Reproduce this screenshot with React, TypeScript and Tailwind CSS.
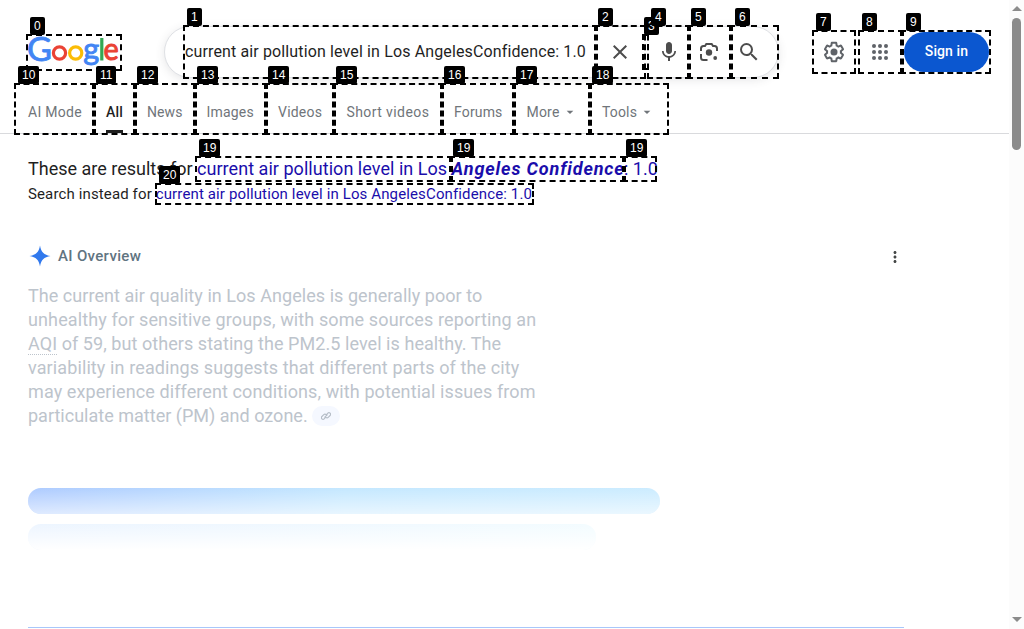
import type { ReactNode } from "react";
import { MdMic, MdSearch, MdClose, MdMoreVert, MdArrowDropDown } from "react-icons/md";

const tabs = [
  { label: "AI Mode", cell: "w-[78px] tracking-[0.3px]" },
  { label: "All", cell: "w-[41px] text-[#1f1f1f] font-medium tracking-[0.2px]", active: true },
  { label: "News", cell: "w-[59.5px] tracking-[0.1px]" },
  { label: "Images", cell: "w-[71.5px] tracking-[0.2px]" },
  { label: "Videos", cell: "w-[68.5px] tracking-[0.22px]" },
  { label: "Short videos", cell: "w-[107.5px] tracking-[0.41px]" },
  { label: "Forums", cell: "w-[72.5px] tracking-[0.15px]" },
  { label: "More", cell: "w-[75.5px] tracking-[0.2px]", arrow: true },
  { label: "Tools", cell: "w-[79px] tracking-[0.15px]", arrow: true },
];

const boxes = [
  "left-[26px] top-[34px] w-[96px] h-[37px]",
  "left-[183px] top-[25px] w-[415px] h-[54px]",
  "left-[594px] top-[25px] w-[52px] h-[54px]",
  "left-[642px] top-[34px] w-[7px] h-[36px]",
  "left-[647px] top-[25px] w-[44px] h-[54px]",
  "left-[687px] top-[25px] w-[46px] h-[54px]",
  "left-[729px] top-[25px] w-[50px] h-[54px]",
  "left-[812px] top-[30px] w-[44px] h-[44px]",
  "left-[858px] top-[30px] w-[46px] h-[44px]",
  "left-[900px] top-[30px] w-[91px] h-[44px]",
  "left-[14px] top-[83px] w-[82px] h-[52px]",
  "left-[92px] top-[83px] w-[45px] h-[52px]",
  "left-[133px] top-[83px] w-[64px] h-[52px]",
  "left-[193px] top-[83px] w-[75px] h-[52px]",
  "left-[264px] top-[83px] w-[72px] h-[52px]",
  "left-[332px] top-[83px] w-[112px] h-[52px]",
  "left-[440px] top-[83px] w-[76px] h-[52px]",
  "left-[512px] top-[83px] w-[80px] h-[52px]",
  "left-[588px] top-[83px] w-[81px] h-[52px]",
  "left-[195px] top-[156px] w-[258px] h-[26px]",
  "left-[449px] top-[156px] w-[177px] h-[26px]",
  "left-[622px] top-[156px] w-[35px] h-[26px]",
  "left-[155px] top-[183px] w-[379px] h-[22px]",
];

const badges: [string, string][] = [
  ["0", "left-[30px] top-[17px]"],
  ["1", "left-[187px] top-[8px]"],
  ["2", "left-[598px] top-[8px]"],
  ["3", "left-[644px] top-[17px]"],
  ["4", "left-[651px] top-[8px]"],
  ["5", "left-[691px] top-[8px]"],
  ["6", "left-[735px] top-[8px]"],
  ["7", "left-[816px] top-[13px]"],
  ["8", "left-[862px] top-[13px]"],
  ["9", "left-[906px] top-[13px]"],
  ["10", "left-[18px] top-[66px]"],
  ["11", "left-[96px] top-[66px]"],
  ["12", "left-[137px] top-[66px]"],
  ["13", "left-[197px] top-[66px]"],
  ["14", "left-[268px] top-[66px]"],
  ["15", "left-[336px] top-[66px]"],
  ["16", "left-[444px] top-[66px]"],
  ["17", "left-[516px] top-[66px]"],
  ["18", "left-[592px] top-[66px]"],
  ["19", "left-[199px] top-[139px]"],
  ["19", "left-[453px] top-[139px]"],
  ["19", "left-[626px] top-[139px]"],
  ["20", "left-[159px] top-[166px]"],
];

const paragraph: [ReactNode, string][] = [
  ["The current air quality in Los Angeles is generally poor to", "tracking-[0.05px]"],
  ["unhealthy for sensitive groups, with some sources reporting an", "tracking-[0.12px]"],
  [
    <><span className="underline decoration-dotted decoration-1 underline-offset-4">AQI</span> of 59, but others stating the PM2.5 level is healthy. The</>,
    "tracking-[0.06px]",
  ],
  ["variability in readings suggests that different parts of the city", "tracking-[0.11px]"],
  ["may experience different conditions, with potential issues from", "tracking-[0.1px]"],
];

function Logo() {
  return (
    <svg width="96" height="38" viewBox="0 0 96 38" className="shrink-0 overflow-visible" fontFamily="Lato, sans-serif" aria-label="Google">
      <text x="-1" y="24.700" fontSize="32.500" textLength="25" lengthAdjust="spacingAndGlyphs" fill="#4285f4" stroke="#4285f4" strokeWidth="0.8">G</text>
      <circle cx="31.500" cy="17" r="6.100" fill="none" stroke="#ea4335" strokeWidth="3.200" />
      <circle cx="47.700" cy="17" r="6.100" fill="none" stroke="#fbbc05" strokeWidth="3.200" />
      <text x="55.300" y="24" fontSize="31" textLength="16" lengthAdjust="spacingAndGlyphs" fill="#4285f4" stroke="#4285f4" strokeWidth="0.900">g</text>
      <rect x="72.200" y="2" width="3.200" height="22.500" fill="#34a853" />
      <text x="75.500" y="24.300" fontSize="30.500" textLength="15.200" lengthAdjust="spacingAndGlyphs" fill="#ea4335" stroke="#ea4335" strokeWidth="1">e</text>
    </svg>
  );
}

function LensIcon() {
  return (
    <svg width="20" height="20" viewBox="0 0 20 20" fill="none" stroke="#4d4d4d" strokeWidth="2">
      <path d="M2 9V6.5A2.5 2.5 0 0 1 4.500 4H6l1.300-2h5.400L14 4h1.500A2.500 2.500 0 0 1 18 6.500V9M2 12v3.500A2.500 2.500 0 0 0 4.500 18H8.500" />
      <circle cx="10" cy="10.500" r="3.200" fill="#4d4d4d" stroke="none" />
      <circle cx="16.200" cy="16" r="1.900" fill="#4d4d4d" stroke="none" />
    </svg>
  );
}

function GearIcon() {
  return (
    <svg width="24" height="24" viewBox="0 0 24 24" fill="#5f6368">
      <path d="M13.850 22.250h-3.700c-.74 0-1.360-.54-1.450-1.270l-.27-1.890c-.27-.14-.53-.29-.79-.46l-1.800.72c-.7.26-1.470-.03-1.810-.65L2.200 15.530c-.35-.66-.2-1.440.36-1.880l1.530-1.190c-.01-.15-.02-.3-.02-.46 0-.15.01-.31.02-.46l-1.520-1.190c-.59-.45-.74-1.260-.37-1.880l1.850-3.190c.34-.62 1.110-.9 1.790-.63l1.810.73c.26-.17.52-.32.78-.46l.27-1.910c.09-.7.71-1.250 1.440-1.250h3.700c.74 0 1.360.54 1.450 1.270l.27 1.890c.27.14.53.29.79.46l1.800-.72c.71-.26 1.480.03 1.820.65l1.840 3.180c.36.66.2 1.440-.36 1.880l-1.520 1.190c.01.15.02.3.02.46s-.01.31-.02.46l1.520 1.190c.56.45.72 1.230.37 1.860l-1.860 3.220c-.34.62-1.110.9-1.800.63l-1.800-.72c-.26.17-.52.32-.78.46l-.27 1.910c-.1.680-.72 1.220-1.460 1.220zm-3.230-2h2.760l.37-2.550.53-.22c.44-.18.88-.44 1.340-.78l.45-.34 2.380.96 1.380-2.400-2.030-1.580.07-.56c.03-.26.06-.51.06-.78s-.03-.53-.06-.78l-.07-.56 2.030-1.580-1.390-2.400-2.390.96-.45-.35c-.42-.32-.87-.58-1.330-.77l-.52-.22-.37-2.550h-2.760l-.37 2.550-.53.210c-.44.190-.88.440-1.340.790l-.45.330-2.380-.95-1.390 2.390 2.030 1.580-.07.560a7 7 0 0 0-.06.790c0 .26.020.53.060.78l.07.560-2.030 1.580 1.380 2.400 2.390-.96.450.350c.430.330.860.580 1.330.770l.530.220z" />
      <circle cx="12" cy="12" r="3.500" />
    </svg>
  );
}

function AppsIcon() {
  return (
    <svg width="16" height="16" viewBox="0 0 16 16" fill="#5f6368">
      {[2, 8, 14].map((y) => [2, 8, 14].map((x) => <circle key={`${x}-${y}`} cx={x} cy={y} r="2" />))}
    </svg>
  );
}

function Header() {
  return (
    <header className="flex h-[134px] flex-col border-b border-[#d9dadd]">
      <div className="flex h-[83px] pl-[28px] pt-[26px]">
        <div className="w-[136px] pt-[10px]"><Logo /></div>
        <div className="flex h-[52px] w-[615px] items-center rounded-full border border-[#dfe1e5] bg-white shadow-[0_2px_10px_rgba(60,64,67,0.13)]">
          <span className="w-[432px] whitespace-nowrap pl-5 text-base tracking-[0.13px] text-[#1f1f1f]">
            current air pollution level in Los AngelesConfidence: 1.0
          </span>
          <span className="flex w-[46px] justify-center"><MdClose size={24} color="#4d4d4d" /></span>
          <span className="ml-[5px] flex w-[42px] justify-center"><MdMic size={24} color="#4d4d4d" /></span>
          <span className="flex w-[38px] justify-center"><LensIcon /></span>
          <span className="flex w-[42px] justify-center"><MdSearch size={24} color="#4d4d4d" /></span>
        </div>
        <div className="flex h-[52px] items-center pl-[43px]">
          <GearIcon />
          <span className="ml-[26px]"><AppsIcon /></span>
          <button className="ml-4 h-10 w-[85px] rounded-full bg-[#0b57d0] pb-[2px] text-sm font-medium tracking-[0.1px] text-white">Sign in</button>
        </div>
      </div>
      <nav className="flex h-[50px] pl-4 text-sm text-[#70757a]">
        {tabs.map((t) => (
          <div key={t.label} className={`flex shrink-0 px-3 ${t.cell}`}>
            <span className={`flex items-center whitespace-nowrap ${t.active ? "border-b-[3px] border-[#1f1f1f] pt-[11px]" : "pt-2"}`}>
              {t.label}
              {t.arrow && <MdArrowDropDown size={16} className="ml-[2px]" />}
            </span>
          </div>
        ))}
      </nav>
    </header>
  );
}

function Overview() {
  return (
    <section className="mt-[35px] w-[876px] border-b border-[#a8c7fa]">
      <div className="flex h-8 items-center">
        <svg width="24" height="24" viewBox="0 0 24 24" fill="#3179ed">
          <path d="M12 1.500C13 8 16 11 22.500 12 16 13 13 16 12 22.500 11 16 8 13 1.500 12 8 11 11 8 12 1.500Z" />
        </svg>
        <h2 className="ml-[6px] text-[15px] font-medium tracking-[0.33px] text-[#5f7481]">AI Overview</h2>
        <MdMoreVert size={18} className="mt-[2px] ml-auto text-[#444746]" />
      </div>
      <div className="mt-3 text-lg leading-6 text-[#bdc4cc]">
        {paragraph.map(([text, spacing], i) => (
          <p key={i} className={`whitespace-nowrap ${spacing}`}>{text}</p>
        ))}
        <p className="flex items-center tracking-[0.01px]">
          particulate matter (PM) and ozone.
          <span className="ml-1 flex h-5 w-7 items-center justify-center rounded-full bg-[#f5f8ff]">
            <svg width="10" height="10" viewBox="0 0 10 10" fill="none" stroke="#b5bdc7" strokeWidth="1.100" strokeLinecap="round">
              <path d="M4.300 6.700 3.200 7.800a1.600 1.600 0 0 1-2.300-2.300l1.900-1.900a1.600 1.600 0 0 1 2.300 0M5.700 3.300l1.100-1.100a1.600 1.600 0 0 1 2.300 2.300L7.200 6.400a1.600 1.600 0 0 1-2.300 0M3.800 6.200l2.400-2.400" />
            </svg>
          </span>
        </p>
      </div>
      <div className="mt-[60px] h-[26px] w-[632px] overflow-hidden rounded-[13px] bg-linear-to-r from-[#aecbff] via-[#c5e8ff] via-50% to-[#ccecff]">
        <div className="h-full bg-linear-to-b from-transparent to-white/60" />
      </div>
      <div className="mt-[10px] mb-[77px] h-[26px] w-[568px] overflow-hidden rounded-[13px] bg-linear-to-r from-[#edf5ff] to-[#f3fcff]">
        <div className="h-full bg-linear-to-b from-transparent to-white" />
      </div>
    </section>
  );
}

export default function App() {
  return (
    <div className="relative flex h-[629px] w-[1024px] overflow-hidden bg-white font-['Roboto',sans-serif]">
      <div className="w-[1009px]">
        <Header />
        <main className="pl-7 text-[#1f1f1f]">
          <p className="flex pt-[21px] text-lg leading-7 whitespace-pre">
            These are results for{" "}
            <a className="flex text-[#1a0dab]">
              <span className="w-[254.5px] tracking-[0.04px]">current air pollution level in Los </span>
              <b className="w-[172.5px] tracking-[0.86px] font-bold italic">Angeles Confidence</b>
              <span>: 1.0</span>
            </a>
          </p>
          <p className="text-[15px] leading-[22px] whitespace-pre tracking-[0.13px]">
            Search instead for <a className="text-[#1a0dab]">current air pollution level in Los AngelesConfidence: 1.0</a>
          </p>
          <Overview />
        </main>
      </div>
      <div className="flex w-[15px] flex-col items-center bg-[#fcfcfc]">
        <svg width="10" height="5" viewBox="0 0 10 5" className="mt-[6px] shrink-0" fill="#8b8b8b"><path d="M0 5 5 0l5 5Z" /></svg>
        <div className="mt-[7px] h-[132px] w-[9px] shrink-0 rounded-full bg-[#8b8b8b]" />
        <svg width="10" height="5" viewBox="0 0 10 5" className="mt-auto mb-[7px] shrink-0" fill="#8b8b8b"><path d="M0 0 5 5l5-5Z" /></svg>
      </div>
      {boxes.map((place) => (
        <div key={place} className={`absolute border-2 border-dashed border-black ${place}`} />
      ))}
      {badges.map(([label, place]) => (
        <span key={place} className={`absolute flex h-[18px] items-center rounded-[2px] bg-black px-1 font-['Liberation_Sans',sans-serif] text-xs text-white ${place}`}>
          {label}
        </span>
      ))}
    </div>
  );
}
